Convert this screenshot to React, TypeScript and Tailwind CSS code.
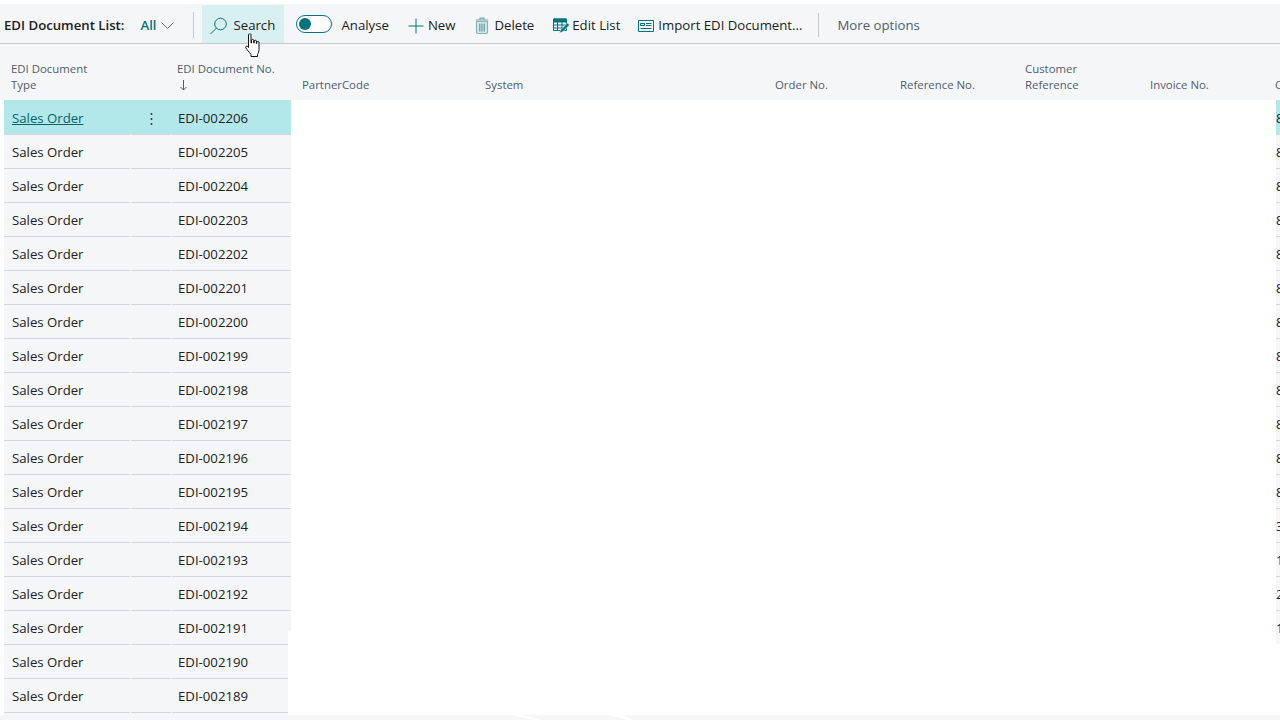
import { Fragment } from 'react';

const Chevron = () => (
  <svg width="13" height="7" viewBox="0 0 13 7" fill="none" stroke="#5f6b7a" strokeWidth="1">
    <path d="M.5.5l6 6 6-6" />
  </svg>
);

const SearchIcon = () => (
  <svg width="18" height="18" viewBox="0 0 18 18" fill="none" stroke="#00747a" strokeWidth="1">
    <circle cx="10.5" cy="7" r="5.800" />
    <path d="M6.300 11.200.5 17" />
  </svg>
);

const PlusIcon = () => (
  <svg width="16" height="16" viewBox="0 0 16 16" fill="none" stroke="#00747a" strokeWidth="1">
    <path d="M8 .5v15M.5 8h15" />
  </svg>
);

const TrashIcon = () => (
  <svg width="14" height="18" viewBox="0 0 14 18" fill="none" stroke="#7fb6ba" strokeWidth="1.200">
    <path d="M1.500 4.500h11V15a1.500 1.500 0 0 1-1.500 1.500H3A1.500 1.500 0 0 1 1.500 15z" fill="#d4e8ea" />
    <path d="M.8 3h12.400M5 3V1.200h4V3" stroke="#6fa8ac" />
    <path d="M4.800 6.500v8M7 6.500v8M9.200 6.500v8" stroke="#5f9ca0" />
  </svg>
);

const EditListIcon = () => (
  <svg width="17" height="16" viewBox="0 0 17 16" fill="none">
    <path d="M.5 1h13v11.500H.5z" stroke="#00747a" />
    <path d="M.5 1h13v3H.5z" fill="#00747a" stroke="#00747a" />
    <path d="M.5 7h13M.5 10h9M4.500 4v9M9 4v8" stroke="#00747a" />
    <path d="m6.500 15 1-3 7-7 2 2-7 7z" fill="#00747a" stroke="#f5f6f8" strokeWidth=".6" />
  </svg>
);

const ImportIcon = () => (
  <svg width="16" height="12" viewBox="0 0 16 12" fill="none" stroke="#00747a">
    <path d="M.5.5h15v11H.5z" />
    <path d="M2.500 3.500h4v2h-4zM8 3.500h5.500M8 5.500h5.500M2.500 8.500h11" />
  </svg>
);

const SortArrow = () => (
  <svg width="7" height="11" viewBox="0 0 7 11" fill="none" stroke="#505c6d" strokeWidth="1">
    <path d="M3.500 0v10M.5 7l3 3 3-3" />
  </svg>
);

// hand pointer sitting over the Search button
const HandCursor = () => (
  <svg className="absolute left-[244px] top-[33px]" width="18" height="25" viewBox="-1 0 18 25">
    <path
      d="M3.500 1.600c0-1 2.500-1 2.500 0V10h.5V7.200c0-1 2.200-1 2.200 0V10h.5V8c0-1 2.200-1 2.200 0v2.500h.5V9.200c0-1 2.100-1 2.100 0v7.300c0 2-.7 3.500-1.500 5v2H6v-2C4.500 19.500 1.700 16.500.8 14.800c-.6-1.200 1-2.300 2-1.300l.7 1z"
      fill="#fff"
      stroke="#111"
      strokeWidth="1"
      strokeLinejoin="round"
    />
  </svg>
);

type Column = { lines: string[]; width: string };

const columns: Column[] = [
  { lines: ['PartnerCode'], width: 'w-[183px]' },
  { lines: ['System'], width: 'w-[290px]' },
  { lines: ['Order No.'], width: 'w-[125px]' },
  { lines: ['Reference No.'], width: 'w-[125px]' },
  { lines: ['Customer', 'Reference'], width: 'w-[125px]' },
  { lines: ['Invoice No.'], width: 'w-[125px]' },
  { lines: ['C'], width: 'w-[20px]' },
];

const lastDigits = ['8', '8', '8', '8', '8', '8', '8', '8', '8', '8', '8', '8', '3', '1', '2', '1'];

const rows = Array.from({ length: 18 }, (_, i) => `EDI-00${2206 - i}`);

export default function App() {
  return (
    <div className="relative h-[720px] w-[1280px] overflow-hidden bg-white pt-1 text-[13.2px] text-[#212121] font-['Open_Sans','Noto_Sans',sans-serif]">
      <div className="flex h-10 items-center border-b border-[#c8c8c8] bg-[#f5f6f8] pl-1 pt-[5px]">
        <span className="font-semibold">EDI Document List:</span>
        <button className="ml-4 flex items-center gap-1 font-semibold text-[#00747a]">
          All
          <Chevron />
        </button>
        <div className="ml-[19px] -mt-[2px] h-[26px] w-px bg-[#c8c8c8]" />
        <div className="ml-2 flex h-[38px] w-[82px] items-center gap-[6px] self-end bg-[#d9f0f2] pl-2 pt-[4px]">
          <SearchIcon />
          Search
        </div>
        <div className="ml-3 -mt-[4px] flex h-[18px] w-[36px] items-center rounded-full border-[1.3px] border-[#00747a] bg-white pl-[2px]">
          <div className="h-3 w-3 rounded-full bg-[#00747a]" />
        </div>
        <span className="ml-[10px]">Analyse</span>
        <div className="ml-[19px] flex items-center gap-1"><PlusIcon />New</div>
        <div className="ml-5 flex items-center gap-[5px]"><TrashIcon />Delete</div>
        <div className="ml-[19px] flex items-center gap-[2px]"><EditListIcon />Edit List</div>
        <div className="ml-[18px] flex items-center gap-1"><ImportIcon />Import EDI Document...</div>
        <div className="ml-4 -mt-[2px] h-[24px] w-px bg-[#c8c8c8]" />
        <span className="ml-[18px] text-[#505c6d]">More options</span>
      </div>

      <div className="flex h-14 items-end bg-[#f5f6f8] pl-1 pb-[7px] text-[11.4px] leading-4 text-[#505c6d]">
        <div className="w-[167px] shrink-0 pl-[7px]">EDI Document<br />Type</div>
        <div className="w-[131px] shrink-0 pl-[6px]">
          EDI Document No.
          <div className="flex h-4 items-center pl-[3px]"><SortArrow /></div>
        </div>
        {columns.map(c => (
          <div key={c.lines[0]} className={`${c.width} shrink-0 whitespace-nowrap`}>
            {c.lines.map((l, i) => (
              <Fragment key={l}>
                {i > 0 && <br />}
                {l}
              </Fragment>
            ))}
          </div>
        ))}
      </div>

      {rows.map((no, i) => {
        const selected = i === 0;
        const cellBg = selected ? 'bg-[#b2e8ea]' : 'bg-[#f5f6f8]';
        const line = i > 0 ? 'border-t border-[#d5d6da] pt-[2px]' : 'pt-[3px]';
        return (
          <div key={no} className="flex h-[34px] pl-1">
            <div className={`flex w-[287px] shrink-0 gap-px ${cellBg}`}>
              <div className={`flex w-[126px] items-center pl-2 ${line}`}>
                {selected ? <a className="text-[#00646a] underline">Sales Order</a> : 'Sales Order'}
              </div>
              <div className={`flex w-10 items-center pl-[19px] ${line}`}>
                {selected && (
                  <svg width="3" height="14" viewBox="0 0 3 14" fill="#333">
                    <circle cx="1.500" cy="2" r="1" />
                    <circle cx="1.500" cy="7" r="1" />
                    <circle cx="1.500" cy="12" r="1" />
                  </svg>
                )}
              </div>
              <div className={`flex flex-1 items-center pl-[6px] ${line}`}>{no}</div>
            </div>
            {lastDigits[i] && (
              <div className={`ml-auto flex w-1 items-center overflow-hidden ${cellBg} ${line}`}>{lastDigits[i]}</div>
            )}
          </div>
        );
      })}

      {/* last row is cut off by the page footer */}
      <div className="ml-1 flex h-[3px] w-[284px] gap-px bg-[#f5f6f8]">
        <div className="w-[126px] border-t border-[#d5d6da]" />
        <div className="w-10 border-t border-[#d5d6da]" />
        <div className="flex-1 border-t border-[#d5d6da]" />
      </div>
      <div className="h-2 bg-[#f5f6f8]" />

      {/* white notch where the lower rows get narrower */}
      <div className="absolute left-[288px] top-[631px] h-[84px] w-[3px] bg-white" />
      {/* small white slivers in the bottom strip */}
      <svg className="absolute left-[505px] top-[715px]" width="130" height="5" viewBox="0 0 130 5" fill="#fff">
        <path d="M5 0h12l16 3h-8l14 2h-9zM105 0h12l11 5h-5z" />
      </svg>
      <HandCursor />
    </div>
  );
}
